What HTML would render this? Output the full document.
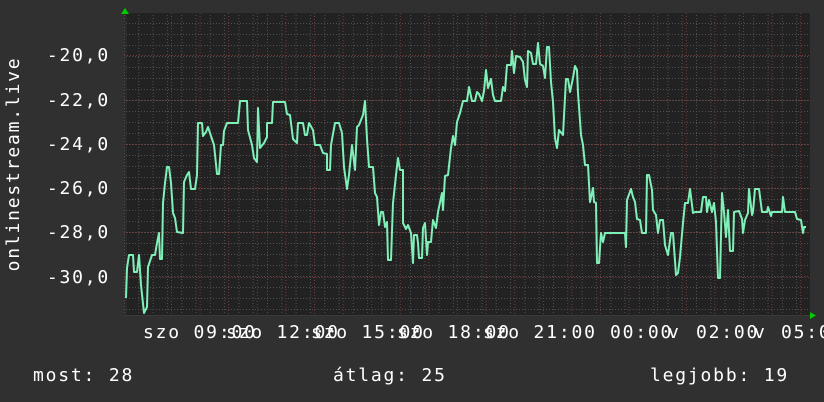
<!DOCTYPE html>
<html><head><meta charset="utf-8"><style>
html,body{margin:0;padding:0;background:#303030;}
body{width:824px;height:402px;overflow:hidden;position:relative;}
svg{position:absolute;left:0;top:0;}
text{font-family:"DejaVu Sans Mono","Liberation Mono",monospace;font-size:18px;fill:#fff;letter-spacing:1.8px;}
</style></head><body>
<svg width="824" height="402" viewBox="0 0 824 402">
<defs>
<pattern id="minV" x="124" y="0" width="14.3" height="402" patternUnits="userSpaceOnUse"><line x1="0.5" y1="0" x2="0.5" y2="402" stroke="#505050" stroke-dasharray="1,2"/></pattern>
<pattern id="minH" x="0" y="1" width="824" height="11" patternUnits="userSpaceOnUse"><line x1="0" y1="0.5" x2="824" y2="0.5" stroke="#505050" stroke-dasharray="1,2"/></pattern>
</defs>
<rect x="124" y="13" width="686" height="303" fill="#222"/>
<rect x="124" y="13" width="3" height="303" fill="#2a2a2a"/>
<rect x="124" y="13" width="686" height="303" fill="url(#minV)"/>
<rect x="124" y="13" width="686" height="303" fill="url(#minH)"/>
<g stroke="#7a3838" stroke-dasharray="1,2">
<line x1="124" y1="55.5" x2="810" y2="55.5"/><line x1="124" y1="100.5" x2="810" y2="100.5"/><line x1="124" y1="144.5" x2="810" y2="144.5"/><line x1="124" y1="188.5" x2="810" y2="188.5"/><line x1="124" y1="232.5" x2="810" y2="232.5"/><line x1="124" y1="277.5" x2="810" y2="277.5"/>
</g>
<g stroke="#7a3838" stroke-dasharray="1,2" id="vm"></g>
<line x1="124" y1="315.5" x2="812" y2="315.5" stroke="#3a3a3a"/>
<polygon points="121,14 125,8 129,14" fill="#0c0"/>
<polygon points="810,312 816,315.5 810,319" fill="#0c0"/>
<polyline fill="none" stroke="#7ff0b8" stroke-width="2" stroke-linejoin="round" points="126,298 127,268 129,255 133,255 134,272 137,272 139,255 141,285 144,313 147,307 148,267 152,255 155,255 157,243 159,233 160,259 162,259 163,203 165,183 167,167 169,167 171,183 173,213 175,218 177,232 183,233 184,182 187,175 189,172 191,189 195,189 197,175 198,123 202,123 203,136 206,132 208,127 211,136 214,145 217,174 219,174 221,145 223,145 224,131 227,123 238,123 240,101 247,101 248,130 252,145 254,158 257,162 258,108 260,148 264,143 267,137 267,123 272,123 273,102 285,102 287,114 290,115 293,139 297,143 298,123 303,123 305,135 307,135 309,123 313,130 315,145 320,145 323,153 327,154 327,170 330,170 331,145 335,123 339,123 342,133 344,167 347,189 349,175 352,145 355,170 357,127 359,125 363,115 365,101 367,139 369,167 373,167 375,193 377,197 379,225 381,212 383,212 385,227 387,222 388,260 391,260 393,203 396,175 398,158 400,170 403,170 403,223 406,229 408,225 411,233 413,263 414,235 417,235 418,243 419,258 422,258 423,228 425,223 427,255 428,242 431,242 433,220 436,228 438,212 442,193 443,210 445,176 448,175 451,148 453,136 455,145 457,122 460,113 463,101 467,101 469,87 472,101 475,101 477,92 479,94 482,101 484,91 486,70 488,88 491,79 493,95 495,101 501,101 503,87 505,91 507,65 511,65 512,51 514,73 516,56 520,57 523,62 525,80 527,87 528,51 531,53 533,64 536,64 538,43 540,64 543,66 545,78 547,47 549,47 551,82 553,102 555,138 557,148 559,130 563,135 566,79 568,79 570,92 573,78 575,66 577,70 578,93 581,135 583,145 585,165 588,165 590,202 593,188 594,202 596,203 597,263 599,263 601,233 603,242 605,233 625,233 626,247 627,200 631,189 633,197 635,202 637,219 640,220 642,233 646,233 647,175 649,175 652,190 653,210 656,215 658,233 660,220 663,220 665,245 668,255 671,233 673,233 676,275 678,273 680,257 683,223 685,203 688,203 690,189 693,213 695,212 701,212 703,197 706,197 707,212 709,200 712,212 714,203 716,222 718,278 720,278 722,193 724,212 726,237 728,210 730,251 733,251 734,212 739,211 742,219 743,233 745,220 748,213 749,189 752,215 753,212 755,189 759,189 762,212 767,212 768,207 771,216 772,212 782,212 783,197 785,212 795,212 797,219 801,220 803,233 804,227 806,227"/>
<g text-anchor="end">
<text x="110" y="61">-20,0</text><text x="110" y="106">-22,0</text><text x="110" y="150">-24,0</text><text x="110" y="194">-26,0</text><text x="110" y="238">-28,0</text><text x="110" y="283">-30,0</text>
</g>
<text transform="translate(19,164) rotate(-90)" text-anchor="middle">onlinestream.live</text>
<text x="143" y="338">szo 09:00</text>
<text x="226" y="338">szo 12:00</text>
<text x="311" y="338">szo 15:00</text>
<text x="397" y="338">szo 18:00</text>
<text x="483" y="338">szo 21:00</text>
<text x="610" y="338">00:00</text>
<text x="668" y="338">v</text>
<text x="696" y="338">02:00</text>
<text x="754" y="338">v</text>
<text x="781" y="338">05:00</text>
<text x="33" y="381">most: 28</text>
<text x="333" y="381">átlag: 25</text>
<text x="650" y="381">legjobb: 19</text>
</svg>
<script>
var g=document.getElementById('vm');for(var i=0;i<24;i++){var x=171.5+i*28.6;if(x>810)break;var l=document.createElementNS('http://www.w3.org/2000/svg','line');l.setAttribute('x1',x);l.setAttribute('x2',x);l.setAttribute('y1',13);l.setAttribute('y2',316);g.appendChild(l);}
</script>
</body></html>
